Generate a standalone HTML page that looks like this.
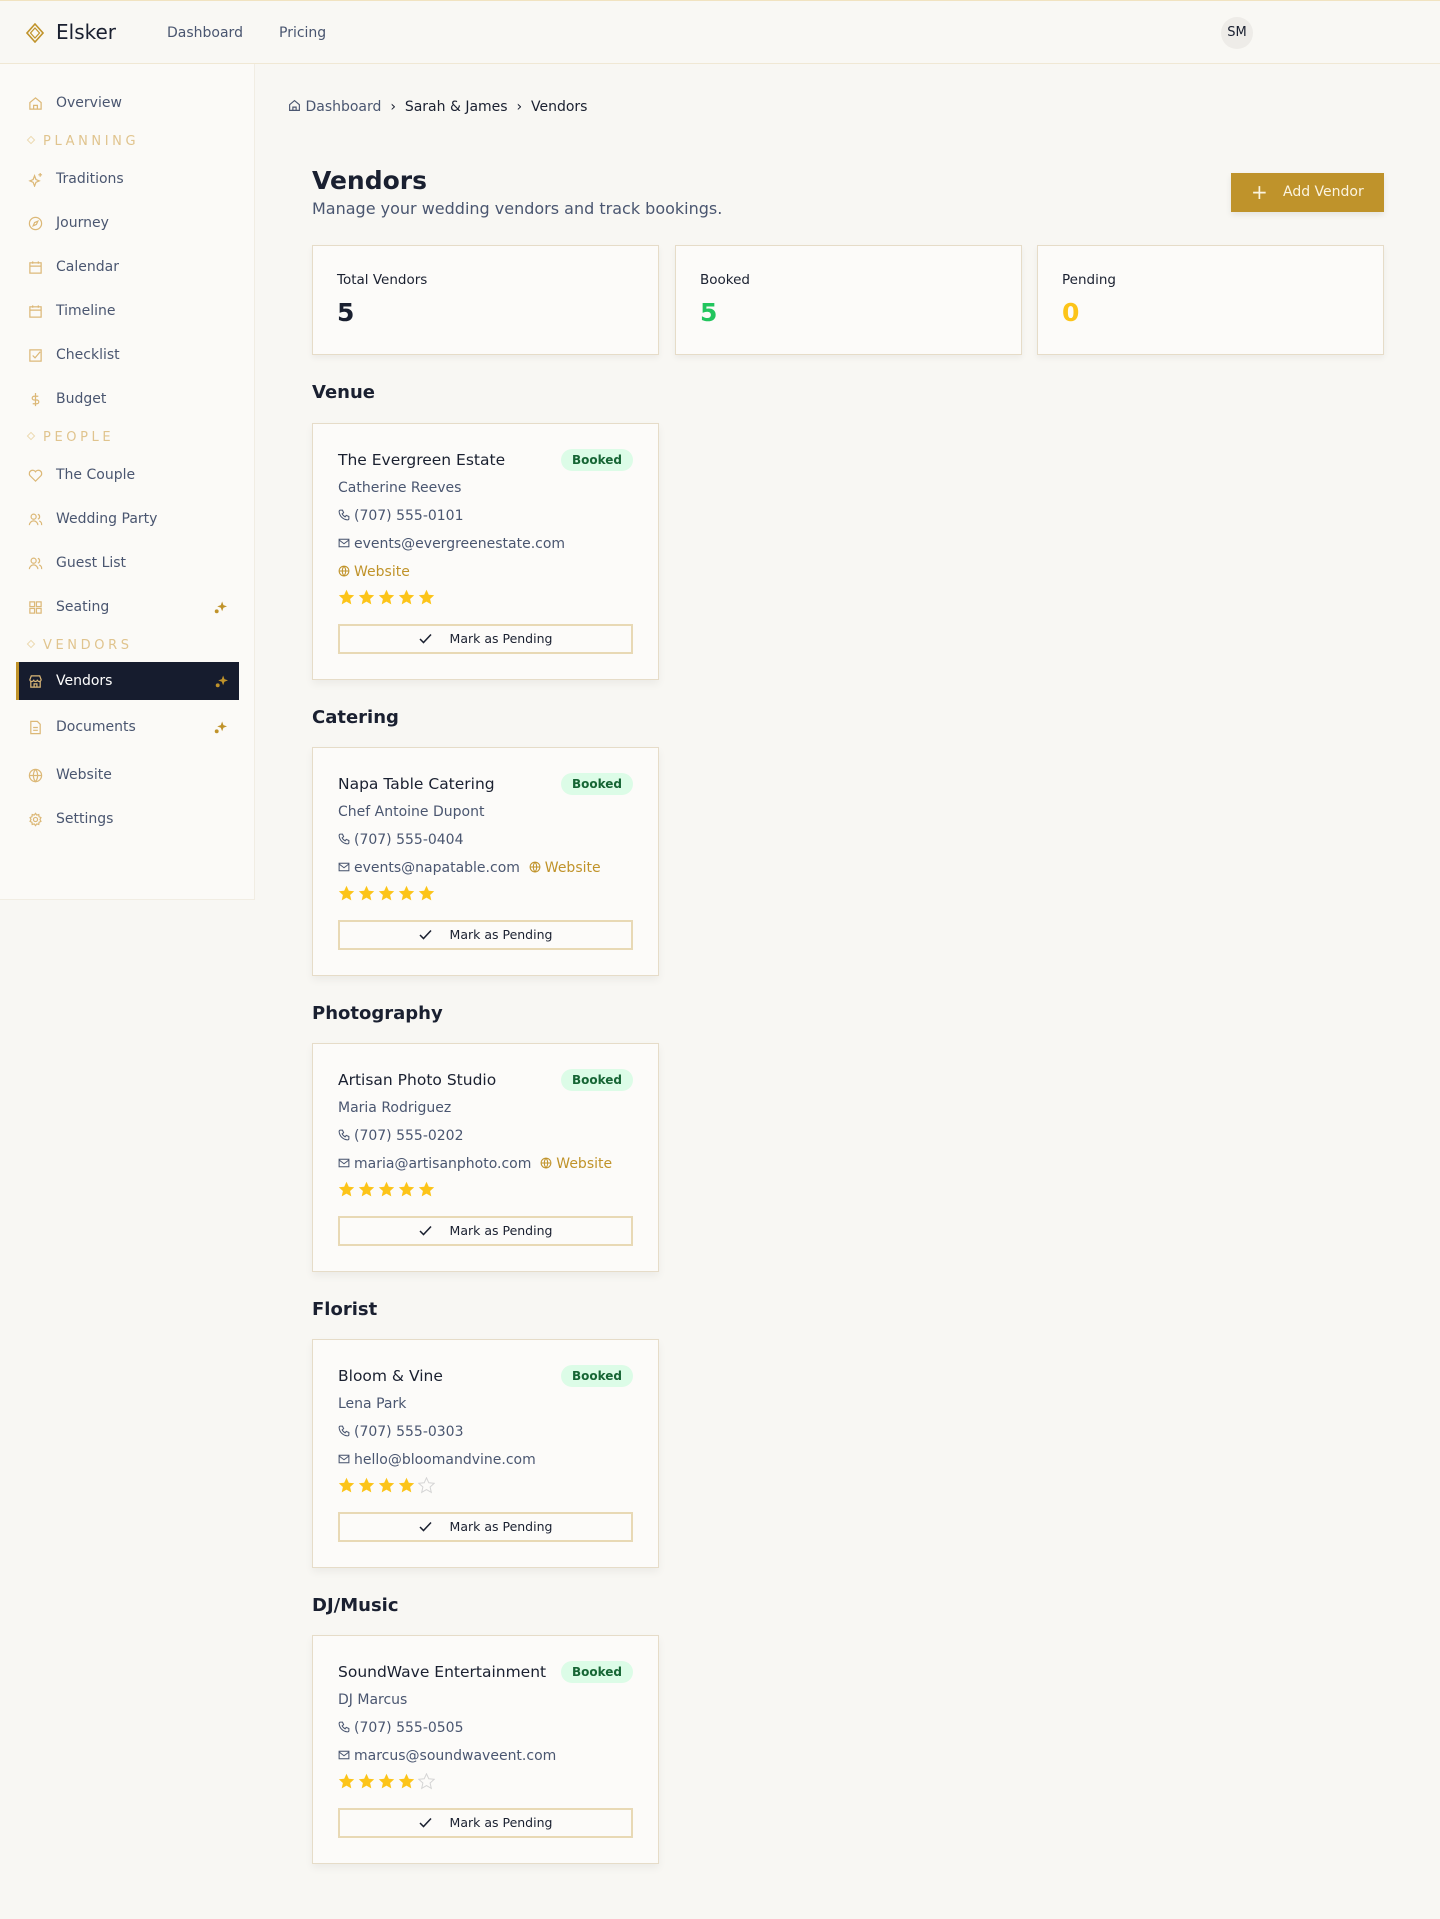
<!DOCTYPE html>
<html><head><meta charset="utf-8"><style>
*{box-sizing:border-box;margin:0;padding:0}
body{width:1440px;height:1919px;background:#f8f7f3;font-family:"DejaVu Sans","Liberation Sans",sans-serif;color:#1a2030;position:relative;overflow:hidden}
.hdr{position:absolute;left:0;top:0;width:1440px;height:64px;background:#f9f8f4;border-top:1px solid #f1e3c0;border-bottom:1px solid #f0e8d4}
.logo{position:absolute;left:26px;top:22px}
.brand{position:absolute;left:56px;top:19px;font-size:20px;color:#1a2030}
.nav{position:absolute;top:24px;font-size:14px;color:#4a5670}
.av{position:absolute;left:1221px;top:16px;width:32px;height:32px;border-radius:50%;background:#eeece8;font-size:13px;text-align:center;line-height:32px;color:#1a2030}
.side{position:absolute;left:0;top:64px;width:255px;height:836px;background:#fbfaf7;border-right:1px solid #f1ede3;border-bottom:1px solid #f1ede3}
.it{position:absolute;left:0;width:255px;height:38px;font-size:14px;color:#4a5670;line-height:38px}
.it svg{position:absolute;left:28px;top:12px}
.it span{position:absolute;left:56px}
.it .sp{position:absolute;left:214px;top:13px}
.it.act{left:16px;width:223px;background:#161c2e;color:#fff;border-left:3px solid #c0932a}
.it.act svg{left:9px}.it.act span{left:37px}.it.act .sp{left:196px}
.lab{position:absolute;left:28px;font-size:13px;letter-spacing:3.6px;color:#e0c48e;line-height:16px}
.lab i{display:inline-block;width:6px;height:6px;border:1px solid #ecd9b0;transform:rotate(45deg);margin-right:9px;vertical-align:2px}
.bc{position:absolute;left:288px;top:99px;font-size:14px;color:#1a2030}
.bc .g{color:#4a5670}
h1{position:absolute;left:312px;top:166px;font-size:25px;font-weight:bold}
.sub{position:absolute;left:312px;top:199px;font-size:16px;color:#4a5670}
.btn{position:absolute;left:1231px;top:173px;width:153px;height:39px;background:#bf932b;color:#fbf4e0;font-size:14px;line-height:39px;box-shadow:0 3px 6px rgba(0,0,0,.08)}
.btn b{position:absolute;left:20px;font-weight:normal;font-size:20px}
.btn span{position:absolute;left:52px}
.stat{position:absolute;top:245px;width:347px;height:110px;background:#fcfbf9;border:1px solid #e6dcc8;box-shadow:0 3px 6px rgba(0,0,0,.05)}
.stat .l{position:absolute;left:24px;top:26px;font-size:13.5px}
.stat .n{position:absolute;left:24px;top:52px;font-size:25px;font-weight:bold}
.sec{position:absolute;left:312px;font-size:18px;font-weight:bold}
.card{position:absolute;left:312px;width:347px;background:#fcfbf9;border:1px solid #e6dcc8;box-shadow:0 4px 8px rgba(0,0,0,.05);padding:22px 25px 25px}
.row{height:28px;line-height:28px;font-size:14px;color:#4a5670;white-space:nowrap}
.row svg{vertical-align:-1px;margin-right:4px}
.nm{font-size:15.5px;color:#1a2030;position:relative}
.bdg{position:absolute;right:0;top:3px;height:22px;line-height:22px;padding:0 11px;border-radius:11px;background:#dcfce7;color:#166534;font-size:12px;font-weight:bold}
.web{color:#c0932a}
.stars{height:24px;padding-top:3px}
.stars svg{margin-right:3px;vertical-align:top}
.mk{margin-top:14px;height:30px;border:2px solid #e8d9b5;text-align:center;line-height:26px;font-size:12.5px;color:#1a2030}
.mk svg{vertical-align:-1px;margin-right:18px}
</style></head><body>
<svg width="0" height="0" style="position:absolute"><defs><path id="st" d="M8.5 0.8L10.8 5.8L16.2 6.3L12.1 10L13.3 15.4L8.5 12.6L3.7 15.4L4.9 10L0.8 6.3L6.2 5.8Z"/></defs></svg>
<div class="hdr">
<svg class="logo" width="18" height="20" viewBox="0 0 18 20"><path d="M9 1L17 10L9 19L1 10Z" fill="none" stroke="#c0932a" stroke-width="1.6"/><path d="M9 5L13.5 10L9 15L4.5 10Z" fill="none" stroke="#c0932a" stroke-width="1.2"/></svg>
<div class="brand">Elsker</div>
<div class="nav" style="left:167px">Dashboard</div>
<div class="nav" style="left:279px">Pricing</div>
<div class="av">SM</div>
</div>
<div class="side">
<div class="it" style="top:20px"><svg width="15" height="15" viewBox="0 0 16 16" fill="none" stroke="#dcb877" stroke-width="1.3"><path d="M2 7L8 2L14 7V14H2Z"/><path d="M6 14V10H10V14"/></svg><span>Overview</span></div>
<div class="lab" style="top:70px"><i></i>PLANNING</div>
<div class="it" style="top:96px"><svg width="15" height="15" viewBox="0 0 16 16" fill="none" stroke="#dcb877" stroke-width="1.3"><path d="M7 4L8.5 8L12 9.5L8.5 11L7 15L5.5 11L2 9.5L5.5 8Z"/><path d="M13 1V5M11 3H15"/></svg><span>Traditions</span></div>
<div class="it" style="top:140px"><svg width="15" height="15" viewBox="0 0 16 16" fill="none" stroke="#dcb877" stroke-width="1.3"><circle cx="8" cy="8" r="6.5"/><path d="M10.5 5.5L9 9L5.5 10.5L7 7Z"/></svg><span>Journey</span></div>
<div class="it" style="top:184px"><svg width="15" height="15" viewBox="0 0 16 16" fill="none" stroke="#dcb877" stroke-width="1.3"><rect x="2" y="3" width="12" height="11"/><path d="M2 6.5H14M5 1.5V4M11 1.5V4"/></svg><span>Calendar</span></div>
<div class="it" style="top:228px"><svg width="15" height="15" viewBox="0 0 16 16" fill="none" stroke="#dcb877" stroke-width="1.3"><rect x="2" y="3" width="12" height="11"/><path d="M2 6.5H14M5 1.5V4M11 1.5V4"/></svg><span>Timeline</span></div>
<div class="it" style="top:272px"><svg width="15" height="15" viewBox="0 0 16 16" fill="none" stroke="#dcb877" stroke-width="1.3"><rect x="2" y="2" width="12" height="12"/><path d="M5 8L7.5 10.5L13 4"/></svg><span>Checklist</span></div>
<div class="it" style="top:316px"><svg width="15" height="15" viewBox="0 0 16 16" fill="none" stroke="#dcb877" stroke-width="1.3"><path d="M8 1V15M11 4.5H6.5a2 2 0 000 4h3a2 2 0 010 4H5"/></svg><span>Budget</span></div>
<div class="lab" style="top:366px"><i></i>PEOPLE</div>
<div class="it" style="top:392px"><svg width="15" height="15" viewBox="0 0 16 16" fill="none" stroke="#dcb877" stroke-width="1.3"><path d="M8 14L2 8a3.3 3.3 0 016-4a3.3 3.3 0 016 4Z"/></svg><span>The Couple</span></div>
<div class="it" style="top:436px"><svg width="15" height="15" viewBox="0 0 16 16" fill="none" stroke="#dcb877" stroke-width="1.3"><circle cx="6" cy="5" r="2.7"/><path d="M1.5 14a4.5 4.5 0 019 0M10.5 2.5a2.6 2.6 0 010 5M12 9.5a4 4 0 012.5 4.5"/></svg><span>Wedding Party</span></div>
<div class="it" style="top:480px"><svg width="15" height="15" viewBox="0 0 16 16" fill="none" stroke="#dcb877" stroke-width="1.3"><circle cx="6" cy="5" r="2.7"/><path d="M1.5 14a4.5 4.5 0 019 0M10.5 2.5a2.6 2.6 0 010 5M12 9.5a4 4 0 012.5 4.5"/></svg><span>Guest List</span></div>
<div class="it" style="top:524px"><svg width="15" height="15" viewBox="0 0 16 16" fill="none" stroke="#dcb877" stroke-width="1.3"><rect x="2" y="2" width="5" height="5"/><rect x="9" y="2" width="5" height="5"/><rect x="2" y="9" width="5" height="5"/><rect x="9" y="9" width="5" height="5"/></svg><span>Seating</span><svg class="sp" width="13" height="13" viewBox="0 0 12 12" fill="#c0932a"><path d="M7.5 0.5L8.7 3.8L12 5L8.7 6.2L7.5 9.5L6.3 6.2L3 5L6.3 3.8Z"/><circle cx="2.5" cy="9.5" r="1.8"/></svg></div>
<div class="lab" style="top:574px"><i></i>VENDORS</div>
<div class="it act" style="top:598px"><svg width="15" height="15" viewBox="0 0 16 16" fill="none" stroke="#dcb877" stroke-width="1.3"><path d="M2 6L3.5 2H12.5L14 6a2 2 0 01-4 0a2 2 0 01-4 0a2 2 0 01-4 0ZM3 8V14H13V8M6.5 14V10.5H9.5V14"/></svg><span>Vendors</span><svg class="sp" width="13" height="13" viewBox="0 0 12 12" fill="#c0932a"><path d="M7.5 0.5L8.7 3.8L12 5L8.7 6.2L7.5 9.5L6.3 6.2L3 5L6.3 3.8Z"/><circle cx="2.5" cy="9.5" r="1.8"/></svg></div>
<div class="it" style="top:644px"><svg width="15" height="15" viewBox="0 0 16 16" fill="none" stroke="#dcb877" stroke-width="1.3"><path d="M3 1.5H10L13 4.5V14.5H3Z"/><path d="M5.5 8H10.5M5.5 11H10.5"/></svg><span>Documents</span><svg class="sp" width="13" height="13" viewBox="0 0 12 12" fill="#c0932a"><path d="M7.5 0.5L8.7 3.8L12 5L8.7 6.2L7.5 9.5L6.3 6.2L3 5L6.3 3.8Z"/><circle cx="2.5" cy="9.5" r="1.8"/></svg></div>
<div class="it" style="top:692px"><svg width="15" height="15" viewBox="0 0 16 16" fill="none" stroke="#dcb877" stroke-width="1.3"><circle cx="8" cy="8" r="6.5"/><path d="M1.5 8H14.5M8 1.5C5 5 5 11 8 14.5C11 11 11 5 8 1.5"/></svg><span>Website</span></div>
<div class="it" style="top:736px"><svg width="15" height="15" viewBox="0 0 16 16" fill="none" stroke="#dcb877" stroke-width="1.3"><circle cx="8" cy="8" r="2.2"/><path d="M8 1.5L9.3 3.3L11.5 2.7L11.8 5L13.8 6L12.8 8L13.8 10L11.8 11L11.5 13.3L9.3 12.7L8 14.5L6.7 12.7L4.5 13.3L4.2 11L2.2 10L3.2 8L2.2 6L4.2 5L4.5 2.7L6.7 3.3Z"/></svg><span>Settings</span></div>
</div>
<div class="bc"><svg width="13" height="13" viewBox="0 0 16 16" fill="none" stroke="#4a5670" stroke-width="1.4" style="vertical-align:-1px"><path d="M2 7L8 2L14 7V14H2Z"/><path d="M6 14V10H10V14"/></svg> <span class="g">Dashboard</span> &nbsp;›&nbsp; Sarah &amp; James &nbsp;›&nbsp; Vendors</div>
<h1>Vendors</h1>
<div class="sub">Manage your wedding vendors and track bookings.</div>
<div class="btn"><b>+</b><span>Add Vendor</span></div>
<div class="stat" style="left:312px"><div class="l">Total Vendors</div><div class="n">5</div></div>
<div class="stat" style="left:675px"><div class="l">Booked</div><div class="n" style="color:#22c55e">5</div></div>
<div class="stat" style="left:1037px"><div class="l">Pending</div><div class="n" style="color:#fcc419">0</div></div>

<div class="sec" style="top:382px">Venue</div>
<div class="card" style="top:423px">
<div class="row nm">The Evergreen Estate<span class="bdg">Booked</span></div>
<div class="row">Catherine Reeves</div>
<div class="row"><svg width="12" height="12" viewBox="0 0 16 16" fill="none" stroke="#4a5670" stroke-width="1.4"><path d="M3 1.5L6 1.5L7.5 5L5.5 6.5C6.5 8.5 7.5 9.5 9.5 10.5L11 8.5L14.5 10V13C14.5 14 13.5 14.5 12.5 14.5C6.5 14 2 9.5 1.5 3.5C1.5 2.5 2 1.5 3 1.5Z"/></svg>(707) 555-0101</div>
<div class="row"><svg width="12" height="12" viewBox="0 0 16 16" fill="none" stroke="#4a5670" stroke-width="1.4"><rect x="1.5" y="3" width="13" height="10"/><path d="M1.5 4L8 9L14.5 4"/></svg>events@evergreenestate.com</div>
<div class="row web"><svg width="12" height="12" viewBox="0 0 16 16" fill="none" stroke="#c0932a" stroke-width="1.4"><circle cx="8" cy="8" r="6.5"/><path d="M1.5 8H14.5M8 1.5C5 5 5 11 8 14.5C11 11 11 5 8 1.5"/></svg>Website</div>
<div class="stars"><svg width="17" height="17" fill="#fcc419"><use href="#st"/></svg><svg width="17" height="17" fill="#fcc419"><use href="#st"/></svg><svg width="17" height="17" fill="#fcc419"><use href="#st"/></svg><svg width="17" height="17" fill="#fcc419"><use href="#st"/></svg><svg width="17" height="17" fill="#fcc419"><use href="#st"/></svg></div>
<div class="mk"><svg width="13" height="11" viewBox="0 0 13 11" fill="none" stroke="#1a2030" stroke-width="1.5"><path d="M1 6L4.5 9.5L12 1.5"/></svg>Mark as Pending</div>
</div>

<div class="sec" style="top:707px">Catering</div>
<div class="card" style="top:747px">
<div class="row nm">Napa Table Catering<span class="bdg">Booked</span></div>
<div class="row">Chef Antoine Dupont</div>
<div class="row"><svg width="12" height="12" viewBox="0 0 16 16" fill="none" stroke="#4a5670" stroke-width="1.4"><path d="M3 1.5L6 1.5L7.5 5L5.5 6.5C6.5 8.5 7.5 9.5 9.5 10.5L11 8.5L14.5 10V13C14.5 14 13.5 14.5 12.5 14.5C6.5 14 2 9.5 1.5 3.5C1.5 2.5 2 1.5 3 1.5Z"/></svg>(707) 555-0404</div>
<div class="row"><svg width="12" height="12" viewBox="0 0 16 16" fill="none" stroke="#4a5670" stroke-width="1.4"><rect x="1.5" y="3" width="13" height="10"/><path d="M1.5 4L8 9L14.5 4"/></svg>events@napatable.com &nbsp;<span class="web"><svg width="12" height="12" viewBox="0 0 16 16" fill="none" stroke="#c0932a" stroke-width="1.4"><circle cx="8" cy="8" r="6.5"/><path d="M1.5 8H14.5M8 1.5C5 5 5 11 8 14.5C11 11 11 5 8 1.5"/></svg>Website</span></div>
<div class="stars"><svg width="17" height="17" fill="#fcc419"><use href="#st"/></svg><svg width="17" height="17" fill="#fcc419"><use href="#st"/></svg><svg width="17" height="17" fill="#fcc419"><use href="#st"/></svg><svg width="17" height="17" fill="#fcc419"><use href="#st"/></svg><svg width="17" height="17" fill="#fcc419"><use href="#st"/></svg></div>
<div class="mk"><svg width="13" height="11" viewBox="0 0 13 11" fill="none" stroke="#1a2030" stroke-width="1.5"><path d="M1 6L4.5 9.5L12 1.5"/></svg>Mark as Pending</div>
</div>

<div class="sec" style="top:1003px">Photography</div>
<div class="card" style="top:1043px">
<div class="row nm">Artisan Photo Studio<span class="bdg">Booked</span></div>
<div class="row">Maria Rodriguez</div>
<div class="row"><svg width="12" height="12" viewBox="0 0 16 16" fill="none" stroke="#4a5670" stroke-width="1.4"><path d="M3 1.5L6 1.5L7.5 5L5.5 6.5C6.5 8.5 7.5 9.5 9.5 10.5L11 8.5L14.5 10V13C14.5 14 13.5 14.5 12.5 14.5C6.5 14 2 9.5 1.5 3.5C1.5 2.5 2 1.5 3 1.5Z"/></svg>(707) 555-0202</div>
<div class="row"><svg width="12" height="12" viewBox="0 0 16 16" fill="none" stroke="#4a5670" stroke-width="1.4"><rect x="1.5" y="3" width="13" height="10"/><path d="M1.5 4L8 9L14.5 4"/></svg>maria@artisanphoto.com &nbsp;<span class="web"><svg width="12" height="12" viewBox="0 0 16 16" fill="none" stroke="#c0932a" stroke-width="1.4"><circle cx="8" cy="8" r="6.5"/><path d="M1.5 8H14.5M8 1.5C5 5 5 11 8 14.5C11 11 11 5 8 1.5"/></svg>Website</span></div>
<div class="stars"><svg width="17" height="17" fill="#fcc419"><use href="#st"/></svg><svg width="17" height="17" fill="#fcc419"><use href="#st"/></svg><svg width="17" height="17" fill="#fcc419"><use href="#st"/></svg><svg width="17" height="17" fill="#fcc419"><use href="#st"/></svg><svg width="17" height="17" fill="#fcc419"><use href="#st"/></svg></div>
<div class="mk"><svg width="13" height="11" viewBox="0 0 13 11" fill="none" stroke="#1a2030" stroke-width="1.5"><path d="M1 6L4.5 9.5L12 1.5"/></svg>Mark as Pending</div>
</div>

<div class="sec" style="top:1299px">Florist</div>
<div class="card" style="top:1339px">
<div class="row nm">Bloom &amp; Vine<span class="bdg">Booked</span></div>
<div class="row">Lena Park</div>
<div class="row"><svg width="12" height="12" viewBox="0 0 16 16" fill="none" stroke="#4a5670" stroke-width="1.4"><path d="M3 1.5L6 1.5L7.5 5L5.5 6.5C6.5 8.5 7.5 9.5 9.5 10.5L11 8.5L14.5 10V13C14.5 14 13.5 14.5 12.5 14.5C6.5 14 2 9.5 1.5 3.5C1.5 2.5 2 1.5 3 1.5Z"/></svg>(707) 555-0303</div>
<div class="row"><svg width="12" height="12" viewBox="0 0 16 16" fill="none" stroke="#4a5670" stroke-width="1.4"><rect x="1.5" y="3" width="13" height="10"/><path d="M1.5 4L8 9L14.5 4"/></svg>hello@bloomandvine.com</div>
<div class="stars"><svg width="17" height="17" fill="#fcc419"><use href="#st"/></svg><svg width="17" height="17" fill="#fcc419"><use href="#st"/></svg><svg width="17" height="17" fill="#fcc419"><use href="#st"/></svg><svg width="17" height="17" fill="#fcc419"><use href="#st"/></svg><svg width="17" height="17" fill="none" stroke="#d4d4d4" stroke-width="1"><use href="#st"/></svg></div>
<div class="mk"><svg width="13" height="11" viewBox="0 0 13 11" fill="none" stroke="#1a2030" stroke-width="1.5"><path d="M1 6L4.5 9.5L12 1.5"/></svg>Mark as Pending</div>
</div>

<div class="sec" style="top:1595px">DJ/Music</div>
<div class="card" style="top:1635px">
<div class="row nm">SoundWave Entertainment<span class="bdg">Booked</span></div>
<div class="row">DJ Marcus</div>
<div class="row"><svg width="12" height="12" viewBox="0 0 16 16" fill="none" stroke="#4a5670" stroke-width="1.4"><path d="M3 1.5L6 1.5L7.5 5L5.5 6.5C6.5 8.5 7.5 9.5 9.5 10.5L11 8.5L14.5 10V13C14.5 14 13.5 14.5 12.5 14.5C6.5 14 2 9.5 1.5 3.5C1.5 2.5 2 1.5 3 1.5Z"/></svg>(707) 555-0505</div>
<div class="row"><svg width="12" height="12" viewBox="0 0 16 16" fill="none" stroke="#4a5670" stroke-width="1.4"><rect x="1.5" y="3" width="13" height="10"/><path d="M1.5 4L8 9L14.5 4"/></svg>marcus@soundwaveent.com</div>
<div class="stars"><svg width="17" height="17" fill="#fcc419"><use href="#st"/></svg><svg width="17" height="17" fill="#fcc419"><use href="#st"/></svg><svg width="17" height="17" fill="#fcc419"><use href="#st"/></svg><svg width="17" height="17" fill="#fcc419"><use href="#st"/></svg><svg width="17" height="17" fill="none" stroke="#d4d4d4" stroke-width="1"><use href="#st"/></svg></div>
<div class="mk"><svg width="13" height="11" viewBox="0 0 13 11" fill="none" stroke="#1a2030" stroke-width="1.5"><path d="M1 6L4.5 9.5L12 1.5"/></svg>Mark as Pending</div>
</div>
</body></html>
